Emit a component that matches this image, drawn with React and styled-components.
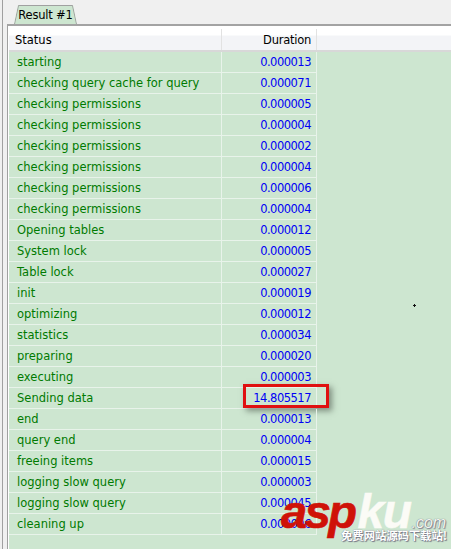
import React from "react";
import styled, { createGlobalStyle } from "styled-components";

const Global = createGlobalStyle`
  html, body { margin: 0; padding: 0; background: #f0f0f0; }
  #root { width: 451px; height: 549px; overflow: hidden; }
`;
const FONT = `"DejaVu Sans", Verdana, sans-serif`;

const Page = styled.div`
  position: relative;
  width: 451px;
  height: 549px;
  box-sizing: border-box;
  padding-left: 2px;
  overflow: hidden;
  font-family: ${FONT};
  font-size: 11.5px;
  background: #f0f0f0;
`;
const Frame = styled.div`
  height: 100%;
  box-sizing: border-box;
  border-left: 1px solid #a0a0a0;
  padding-left: 4px;
  display: flex;
  flex-direction: column;
  padding-top: 5px;
`;
const TabBar = styled.div`
  height: 19px;
  display: flex;
  padding-left: 7px;
`;
const Tab = styled.div`
  width: 63px;
  height: 19px;
  box-sizing: border-box;
  display: flex;
  align-items: center;
  justify-content: center;
  color: #000;
  font-size: 11.5px;
  letter-spacing: -0.2px;
  background: #cde6d0;
  clip-path: polygon(4px 0, 59px 0, 63px 100%, 0 100%);
  position: relative;
`;
const TabEdge = styled.svg`
  position: absolute;
  left: 0;
  top: 0;
`;
const Panel = styled.div`
  flex: 1;
  border-top: 2px solid #a3a3a3;
  border-left: 1px solid #a0a0a0;
  background: #fff;
  padding-top: 3px;
  display: flex;
  flex-direction: column;
`;
const Grid = styled.div`
  flex: 1;
  margin-left: 1px;
  background: #cde6d0;
  display: flex;
  flex-direction: column;
`;
const HeaderRow = styled.div`
  height: 23px;
  box-sizing: border-box;
  display: flex;
  background: linear-gradient(#ffffff 0, #ffffff 30%, #f3f4f7 32%, #f3f4f7 100%);
  border-bottom: 2px solid #d8d8d8;
  color: #000;
`;
const HeadCell = styled.div`
  width: ${(p) => p.$w}px;
  box-sizing: border-box;
  border-right: 1px solid #e2e2e2;
  display: flex;
  align-items: center;
  justify-content: ${(p) => (p.$right ? "flex-end" : "flex-start")};
  padding: ${(p) => (p.$right ? "0 5px 0 0" : "0 0 0 6px")};
  letter-spacing: ${(p) => (p.$right ? "-0.25px" : "0")};
`;
const HeadFill = styled.div`
  flex: 1;
`;
const Row = styled.div`
  height: 21px;
  box-sizing: border-box;
  display: flex;
  width: 308px;
  border-bottom: 1px solid #e8f3ea;
`;
const StatusCell = styled.div`
  width: 213px;
  box-sizing: border-box;
  border-right: 1px solid #e8f3ea;
  padding-left: 8px;
  color: #007a00;
  display: flex;
  align-items: center;
  white-space: nowrap;
`;
const DurationCell = styled.div`
  width: 95px;
  box-sizing: border-box;
  border-right: 1px solid #e8f3ea;
  padding-right: 5px;
  color: #0000f5;
  display: flex;
  align-items: center;
  justify-content: flex-end;
  position: relative;
  letter-spacing: -0.5px;
`;
const Highlight = styled.div`
  position: absolute;
  left: 21px;
  top: -4px;
  width: 86px;
  height: 24px;
  box-sizing: border-box;
  border: 3px solid #e01010;
  box-shadow: 3px 3px 6px rgba(60, 70, 60, 0.55);
`;
const Cursor = styled.svg`
  position: absolute;
  left: 413px;
  top: 304px;
`;
const Watermark = styled.div`
  position: absolute;
  left: 281px;
  top: 490px;
  width: 170px;
  height: 59px;
  font-family: "Liberation Sans", Arial, sans-serif;
`;
const Brand = styled.div`
  display: flex;
  align-items: baseline;
  height: 44px;
  line-height: 44px;
  white-space: nowrap;
`;
const Asp = styled.span`
  font-size: 47px;
  font-weight: 700;
  font-style: italic;
  color: #cf1208;
  -webkit-text-stroke: 0.7px #cf1208;
  letter-spacing: -2.5px;
  margin-right: 3px;
`;
const Ku = styled.span`
  font-size: 48px;
  font-weight: 700;
  font-style: italic;
  color: #fbfbf6;
  -webkit-text-stroke: 0.5px #fbfbf6;
  letter-spacing: -1.5px;
`;
const Com = styled.span`
  font-size: 16px;
  font-style: italic;
  color: #f4f6f0;
  text-shadow: 0 0 1px #556, 1px 1px 1px #889;
  margin-left: 1px;
`;
const Slogan = styled.div`
  position: absolute;
  left: 60px;
  top: 38px;
  font-family: "Noto Sans CJK SC", sans-serif;
  font-size: 11.5px;
  font-weight: 700;
  letter-spacing: -0.2px;
  line-height: 15px;
  color: #fff;
  text-shadow: 0 0 1px #667, 1px 1px 1px #778;
  white-space: nowrap;
`;

const rows = [
  ["starting", "0.000013"],
  ["checking query cache for query", "0.000071"],
  ["checking permissions", "0.000005"],
  ["checking permissions", "0.000004"],
  ["checking permissions", "0.000002"],
  ["checking permissions", "0.000004"],
  ["checking permissions", "0.000006"],
  ["checking permissions", "0.000004"],
  ["Opening tables", "0.000012"],
  ["System lock", "0.000005"],
  ["Table lock", "0.000027"],
  ["init", "0.000019"],
  ["optimizing", "0.000012"],
  ["statistics", "0.000034"],
  ["preparing", "0.000020"],
  ["executing", "0.000003"],
  ["Sending data", "14.805517", true],
  ["end", "0.000013"],
  ["query end", "0.000004"],
  ["freeing items", "0.000015"],
  ["logging slow query", "0.000003"],
  ["logging slow query", "0.000045"],
  ["cleaning up", "0.000006"],
];

export default function App() {
  return (
    <Page>
      <Global />
      <Frame>
        <TabBar>
          <Tab>
            <TabEdge width="63" height="19">
              <path d="M0.5 19 L4.5 0.5 H58.5 L62.5 19" fill="none" stroke="#a0a0a0" />
            </TabEdge>
            Result #1
          </Tab>
        </TabBar>
        <Panel>
          <Grid>
            <HeaderRow>
              <HeadCell $w={213}>Status</HeadCell>
              <HeadCell $w={95} $right>Duration</HeadCell>
              <HeadFill />
            </HeaderRow>
            {rows.map(([s, d, hi], i) => (
              <Row key={i}>
                <StatusCell>{s}</StatusCell>
                <DurationCell>
                  {d}
                  {hi && <Highlight />}
                </DurationCell>
              </Row>
            ))}
          </Grid>
        </Panel>
      </Frame>
      <Cursor width="3" height="3" viewBox="0 0 3 3">
        <path d="M1 0h1v1h1v1H2v1H1V2H0V1h1z" fill="#111" />
      </Cursor>
      <Watermark>
        <Brand>
          <Asp>asp</Asp>
          <Ku>ku</Ku>
          <Com>.com</Com>
        </Brand>
        <Slogan>免费网站源码下载站!</Slogan>
      </Watermark>
    </Page>
  );
}
